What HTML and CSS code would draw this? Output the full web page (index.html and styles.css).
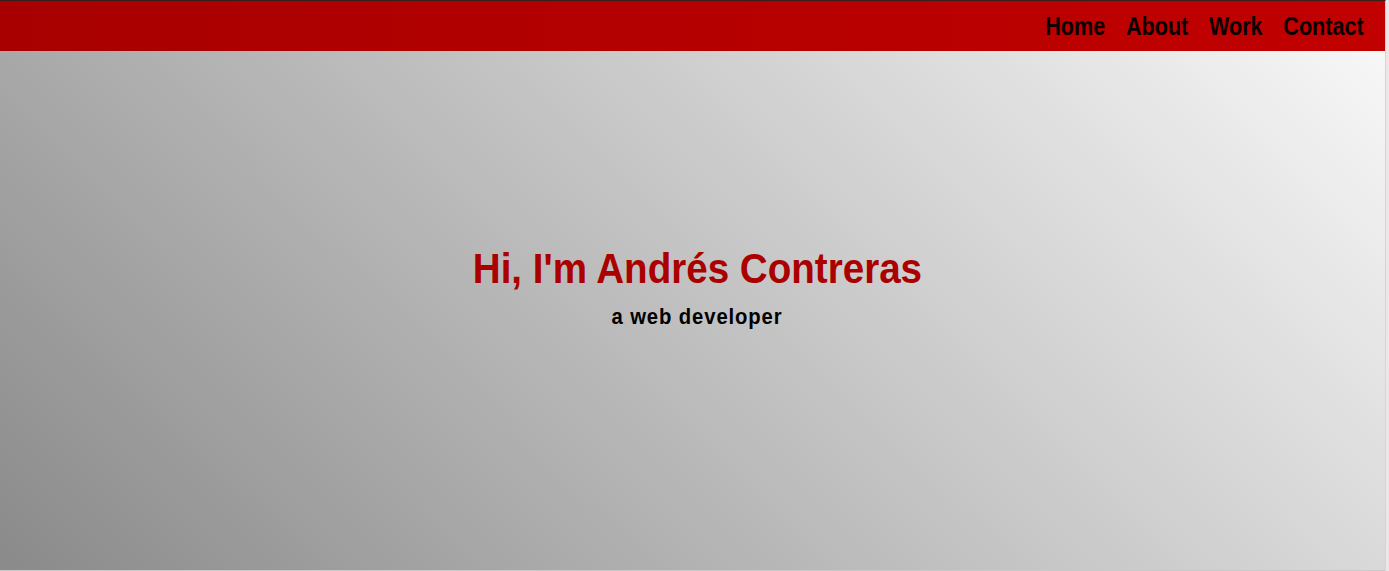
FILE: index.html
```html
<!DOCTYPE html>
<html lang="en">
<head>
<meta charset="utf-8">
<title>Andrés Contreras</title>
<link rel="stylesheet" href="styles.css">
</head>
<body>
<div class="page">
  <header class="topbar">
    <nav class="nav">
      <a href="#" class="nav-link">Home</a>
      <a href="#" class="nav-link">About</a>
      <a href="#" class="nav-link">Work</a>
      <a href="#" class="nav-link">Contact</a>
    </nav>
  </header>
  <main class="hero">
    <h1 class="hero-title">Hi, I'm Andrés Contreras</h1>
    <p class="hero-sub">a web developer</p>
  </main>
</div>
</body>
</html>
```
FILE: styles.css
```css
html, body {
  margin: 0;
  padding: 0;
  height: 100%;
}
body {
  background: #ece7e7;
  font-family: "Liberation Sans", Arial, sans-serif;
  overflow: hidden;
}
.page {
  width: 1386px;
  height: 571px;
  box-sizing: border-box;
  border-top: 1px solid #3a1e1e;
  border-right: 1px solid #d9d3d3;
  display: flex;
  flex-direction: column;
}
.topbar {
  height: 50px;
  flex: none;
  background: linear-gradient(to right, #a80000, #c20000);
  display: flex;
  align-items: center;
  justify-content: flex-end;
  padding-right: 21px;
}
.nav {
  display: flex;
  gap: 25px;
  transform: scaleX(0.83);
  transform-origin: right center;
}
.nav-link {
  color: #0c0000;
  text-decoration: none;
  font-weight: bold;
  font-size: 26px;
  line-height: 1;
}
.hero {
  flex: 1;
  background: linear-gradient(45deg, #8a8a8a, #f7f7f7);
  border-bottom: 1px solid #c9c9c9;
  display: flex;
  flex-direction: column;
  align-items: center;
  justify-content: center;
  padding-left: 10px;
  padding-bottom: 47px;
}
.hero-title {
  margin: 0;
  color: #aa0000;
  font-size: 43px;
  font-weight: bold;
  line-height: 50px;
  transform: scaleX(0.897);
}
.hero-sub {
  margin: 9px 0 0;
  color: #000;
  font-size: 22.5px;
  font-weight: bold;
  letter-spacing: 1px;
  line-height: 30px;
  transform: scaleX(0.9);
}
```
